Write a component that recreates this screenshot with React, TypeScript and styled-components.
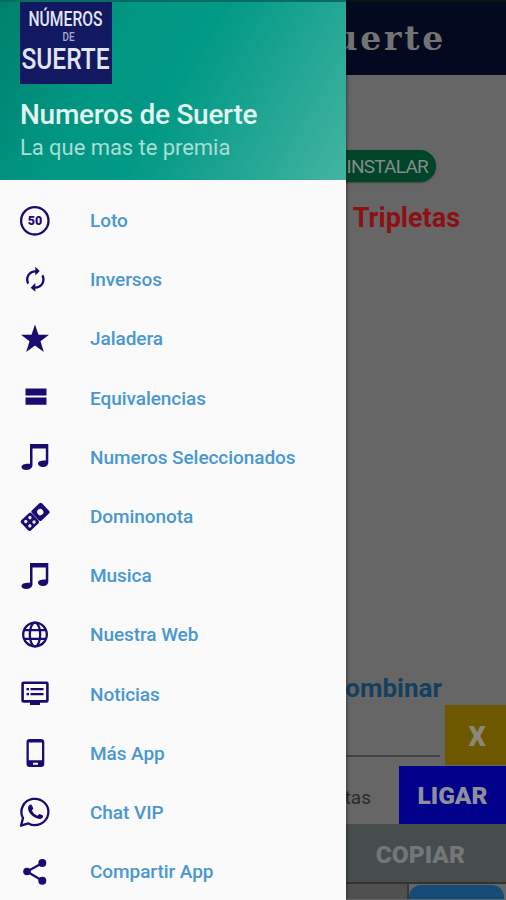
import React from 'react';
import styled, { createGlobalStyle } from 'styled-components';

const GlobalStyle = createGlobalStyle`
  * { box-sizing: border-box; }
  body { margin: 0; background: #666; overflow: hidden; font-family: Roboto, "Liberation Sans", sans-serif; }
`;

const Screen = styled.div`
  position: relative;
  width: 506px;
  height: 900px;
  overflow: hidden;
  background: #666666;
`;

/* Page under the drawer, in its dimmed state */
const Page = styled.main`
  display: flex;
  flex-direction: column;
  align-items: flex-end;
  height: 100%;
  & > * { flex-shrink: 0; }
`;
const TopBar = styled.header`
  display: flex;
  align-items: center;
  justify-content: flex-end;
  width: 100%;
  height: 75px;
  padding: 0 60px 1px 0;
  border-top: 2px solid #071619;
  background: #030a20;
  color: #737373;
  font: bold 33px/1 "DejaVu Serif", serif;
  letter-spacing: 2.8px;
  white-space: nowrap;
`;
const Install = styled.div`
  display: flex;
  align-items: center;
  justify-content: flex-end;
  width: 150px;
  height: 32px;
  margin: 75px 70px 0 0;
  padding-right: 8px;
  border-radius: 16px;
  background: #00452a;
  box-shadow: 0 1px 2px #444;
  color: #858b88;
  font-size: 19px;
  letter-spacing: -0.75px;
`;
const Caption = styled.h2<{ $color: string; $top: number; $right: number; $size: number }>`
  margin: ${p => p.$top}px ${p => p.$right}px 0 0;
  color: ${p => p.$color};
  font-size: ${p => p.$size}px;
  line-height: 32px;
  font-weight: 700;
  white-space: nowrap;
`;
const EntryRow = styled.div`
  display: flex;
  justify-content: flex-end;
  width: 100%;
  height: 60px;
  margin-top: 1px;
`;
const Field = styled.div`
  width: 200px;
  height: 52px;
  margin-right: 5px;
  border-bottom: 2px solid #424242;
`;
const Clear = styled.button`
  width: 61px;
  height: 60px;
  padding: 3px 0 0 3px;
  border: 0;
  background: #6d5800;
  color: #8c8878;
  font: 900 27px Roboto, sans-serif;
`;
const BetRow = styled(EntryRow)`
  height: 58px;
  margin: 1px 0 0;
  align-items: center;
`;
const Option = styled.span`
  margin: 4px 35px 0 0;
  margin-right: 28px;
  color: #2c2c2c;
  font-size: 19px;
`;
const Bind = styled.button`
  align-self: stretch;
  width: 107px;
  padding: 0;
  border: 0;
  background: #01018c;
  color: #8f8f9b;
  font: 900 24.5px Roboto, sans-serif;
`;
const Copy = styled.button`
  width: 100%;
  height: 58px;
  padding: 2px 41px 0 0;
  border: 0;
  background: #474c4c;
  color: #737777;
  font: 900 24.5px Roboto, sans-serif;
  text-align: right;
`;
const Footer = styled.div`
  display: flex;
  justify-content: flex-end;
  width: 100%;
  height: 17px;
  overflow: hidden;
  padding-right: 2px;
  border-top: 2px solid #333;
  background: linear-gradient(90deg, #505050 407px, #373737 407px, #373737 409px, #666 409px);
`;
const FooterButton = styled.div`
  width: 95px;
  height: 30px;
  margin-top: 1px;
  border-radius: 12px;
  background: #164d78;
`;

/* Navigation drawer */
const Drawer = styled.aside`
  position: absolute;
  inset: 0 auto 0 0;
  width: 346px;
  background: #fafafa;
  box-shadow: 0 0 4px rgba(0, 0, 0, 0.65);
`;
const DrawerHeader = styled.div`
  height: 180px;
  padding-left: 20px;
  border-top: 2px solid #086d61;
  background: linear-gradient(120deg, #00806c 0%, #009682 30%, #009985 50%, #44b3a2 100%);
  color: #e1f5f1;
  white-space: nowrap;
`;
const Logo = styled.div`
  width: 92px;
  height: 82px;
  background: #121960;
  svg { display: block; }
`;
const AppName = styled.div`
  margin-top: 14px;
  font-size: 28px;
  line-height: 34px;
  font-weight: 500;
  letter-spacing: -0.27px;
`;
const Tagline = styled.div`
  margin-top: 1px;
  color: #aaded5;
  font-size: 22px;
  line-height: 30px;
  letter-spacing: -0.05px;
`;
const Menu = styled.nav`
  display: grid;
  grid-auto-rows: 59.2px;
  padding-top: 11px;
`;
const Item = styled.a`
  display: grid;
  grid-template-columns: 30px 1fr;
  column-gap: 40px;
  align-items: center;
  padding-left: 20px;
  color: #4997d1;
  font-size: 19px;
  font-weight: 500;
  letter-spacing: -0.06px;
  white-space: nowrap;
`;
const Glyph = styled.svg`
  display: block;
  width: 30px;
  height: 30px;
  overflow: visible;
  fill: #1d0a70;
`;

const music = <path d="M10 2H28.3V20.5C28.3 23.6 25.5 25 22.8 25C20.2 25 18 23.8 18 21.8C18 19.4 21 18.4 25.8 18.6V6.6H12.5V23.3C12.5 26.3 9.4 28 6.2 28C3.6 28 1.5 26.9 1.5 25C1.5 22.5 5 21.4 10 21.7Z" />;

const icons: Record<string, React.ReactNode> = {
  loto: (
    <>
      <circle cx="14.8" cy="14.8" r="13.7" fill="none" stroke="#1d0a70" strokeWidth="2.3" />
      <text x="14.9" y="19.2" textAnchor="middle" fontSize="12.5" fontWeight="900" letterSpacing="0" fontFamily="Roboto, sans-serif">50</text>
    </>
  ),
  loop: (
    <g transform="translate(1.4 .6) scale(1.16)">
      <path d="M12 6v2.5l3.8-3.8L12 1v3c-4.42 0-8 3.58-8 8 0 1.57.46 3.03 1.24 4.26L6.7 14.8c-.45-.83-.7-1.79-.7-2.8 0-3.31 2.69-6 6-6zm6.76 1.74L17.3 9.2c.44.84.7 1.79.7 2.8 0 3.31-2.69 6-6 6v-3l-4 4 4 3.5V20c4.42 0 8-3.58 8-8 0-1.57-.46-3.03-1.24-4.26z" />
    </g>
  ),
  star: <path d="M15 .5L18.5 10.8H29L20.5 17.2L23.8 28L15 21.6L6.2 28L9.5 17.2L1 10.8H11.5Z" />,
  equal: <path d="M5.5 5.5H26.5V12.6H5.5ZM5.5 14.4H26.5V21.8H5.5Z" />,
  music,
  domino: (
    <g transform="rotate(-43 15 15)">
      <rect x="0.8" y="8" width="14.3" height="14" rx="2" />
      <rect x="15.5" y="8" width="14" height="14" rx="2" />
      <circle cx="22.2" cy="15" r="3.1" fill="#fafafa" />
      <g fill="#e8e6f2">
        <circle cx="5.2" cy="12" r="1.7" /><circle cx="10.9" cy="12" r="1.7" />
        <circle cx="5.2" cy="18" r="1.7" /><circle cx="10.9" cy="18" r="1.7" />
      </g>
    </g>
  ),
  globe: (
    <g fill="none" stroke="#1d0a70" strokeWidth="2.3">
      <circle cx="15" cy="14.5" r="11.8" />
      <ellipse cx="15" cy="14.5" rx="5.2" ry="11.8" />
      <path d="M4.5 10.2H25.5M4.5 18.8H25.5" />
    </g>
  ),
  news: (
    <>
      <path fillRule="evenodd" d="M3.5 2.5H26.5Q28.7 2.5 28.7 4.7V21.5Q28.7 23.7 26.5 23.7H20V26H10V23.7H3.5Q1.3 23.7 1.3 21.5V4.7Q1.3 2.5 3.5 2.5ZM3.9 5.1V21.1H26.1V5.1Z" />
      <path d="M6.5 9H9V11.3H6.5ZM10.5 9H23.5V11.3H10.5ZM6.5 14H9V16.3H6.5ZM10.5 14H23.5V16.3H10.5Z" />
    </>
  ),
  phone: <path fillRule="evenodd" d="M9.5 1H21Q24.3 1 24.3 4.3V25.7Q24.3 29 21 29H9.5Q6.5 29 6.5 25.7V4.3Q6.5 1 9.5 1ZM8.8 4.6V22.2H22V4.6ZM13 24.8V26.8H18V24.8Z" />,
  chat: (
    <>
      <path d="M1 28.7L3 21.1A13.5 13.1 0 1 1 8.4 26.4Z" fill="none" stroke="#1d0a70" strokeWidth="2.3" strokeLinejoin="round" />
      <path d="M9.1 8.2C10 7.2 11.4 7.3 11.8 8.1L13.2 11.3C13.3 12.1 12.4 12.8 11.9 13.5C13.1 16 14.9 17.7 17.5 18.7C18.3 18.2 18.9 16.7 19.8 16.9L22.8 18.5C23.6 19.5 22.5 21.5 20.6 21.9C17.3 22.4 13.5 20.3 11.1 17.6C8.6 14.9 6.8 10.9 9.1 8.2Z" />
    </>
  ),
  share: (
    <>
      <path d="M22 6.2L7 14.5L22 23.5" fill="none" stroke="#1d0a70" strokeWidth="2.2" />
      <circle cx="22.3" cy="6" r="4" /><circle cx="7" cy="14.5" r="3.8" /><circle cx="22.3" cy="23.7" r="4" />
    </>
  ),
};

const items = [
  ['loto', 'Loto'], ['loop', 'Inversos'], ['star', 'Jaladera'], ['equal', 'Equivalencias'],
  ['music', 'Numeros Seleccionados'], ['domino', 'Dominonota'], ['music', 'Musica'],
  ['globe', 'Nuestra Web'], ['news', 'Noticias'], ['phone', 'Más App'],
  ['chat', 'Chat VIP'], ['share', 'Compartir App'],
];

export default function App() {
  return (
    <Screen>
      <GlobalStyle />
      <Page>
        <TopBar>Numeros de Suerte</TopBar>
        <Install>INSTALAR</Install>
        <Caption $color="#8c1014" $top={20} $right={46} $size={27}>Tripletas</Caption>
        <Caption $color="#153f5f" $top={438} $right={64} $size={26}>Combinar</Caption>
        <EntryRow>
          <Field />
          <Clear>X</Clear>
        </EntryRow>
        <BetRow>
          <Option>Tripletas</Option>
          <Bind>LIGAR</Bind>
        </BetRow>
        <Copy>COPIAR</Copy>
        <Footer><FooterButton /></Footer>
      </Page>
      <Drawer>
        <DrawerHeader>
          <Logo>
            <svg width="92" height="82" fill="#e2e4f2" fontFamily="Roboto, sans-serif" fontWeight="500" textAnchor="middle">
              <text x="45.5" y="24" fontSize="20.5" textLength="74" lengthAdjust="spacingAndGlyphs">NÚMEROS</text>
              <text x="48.5" y="39" fontSize="12" fill="#a9acd0" textLength="12" lengthAdjust="spacingAndGlyphs">DE</text>
              <text x="45.5" y="66.5" fontSize="29.5" textLength="88" lengthAdjust="spacingAndGlyphs">SUERTE</text>
            </svg>
          </Logo>
          <AppName>Numeros de Suerte</AppName>
          <Tagline>La que mas te premia</Tagline>
        </DrawerHeader>
        <Menu>
          {items.map(([icon, label]) => (
            <Item key={label}>
              <Glyph viewBox="0 0 30 30">{icons[icon]}</Glyph>
              <span>{label}</span>
            </Item>
          ))}
        </Menu>
      </Drawer>
    </Screen>
  );
}
